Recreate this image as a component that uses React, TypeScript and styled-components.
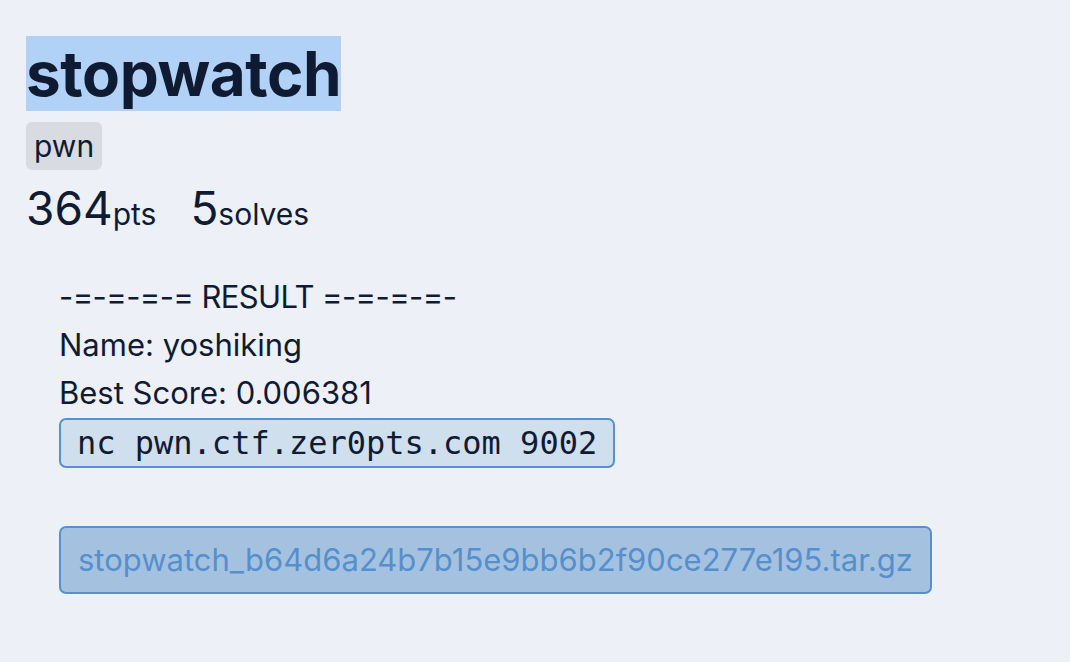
import styled, { createGlobalStyle } from "styled-components";

const GlobalStyle = createGlobalStyle`
  html, body {
    margin: 0;
    padding: 0;
    background: #edf1f7;
  }
  body {
    font-family: Inter, "Liberation Sans", Arial, sans-serif;
    color: #0f1a33;
  }
`;

const Page = styled.main`
  min-height: 662px;
  padding: 36px 26px;
  box-sizing: border-box;
  display: flex;
  flex-direction: column;
  align-items: flex-start;
`;

const Title = styled.h1`
  margin: 0;
  font-size: 62px;
  line-height: 75px;
  font-weight: 700;
  background: #b1d2f6;
  letter-spacing: -0.4px;
`;

const Tag = styled.span`
  margin-top: 11px;
  display: inline-block;
  padding: 0 8px;
  font-size: 30px;
  line-height: 48px;
  background: #d8dbe1;
  border-radius: 6px;
`;

const Stats = styled.div`
  margin-top: 10px;
  display: flex;
  align-items: baseline;
  gap: 34px;
`;

const Stat = styled.span`
  font-size: 46px;
  line-height: 56px;
`;

const Unit = styled.span`
  font-size: 30px;
`;

const Description = styled.div`
  margin-top: 31px;
  padding-left: 33px;
  display: flex;
  flex-direction: column;
  align-items: flex-start;
  font-size: 31px;
  line-height: 48px;
`;

const Banner = styled.span`
  letter-spacing: -0.6px;
`;

const Code = styled.code`
  display: inline-block;
  margin-top: 1px;
  font-family: "DejaVu Sans Mono", "Liberation Mono", monospace;
  font-size: 32px;
  line-height: 46px;
  padding: 0 16px;
  background: #cfdfee;
  border: 2px solid #5790cc;
  border-radius: 7px;
`;

const Download = styled.a`
  margin-top: 58px;
  margin-left: 33px;
  display: inline-block;
  padding: 0 17px;
  font-size: 31px;
  line-height: 64px;
  color: #5590cc;
  text-decoration: none;
  background: #a4c2e0;
  border: 2px solid #5790cc;
  border-radius: 7px;
`;

export default function App() {
  return (
    <>
      <GlobalStyle />
      <Page>
        <Title>stopwatch</Title>
        <Tag>pwn</Tag>
        <Stats>
          <Stat>
            364<Unit>pts</Unit>
          </Stat>
          <Stat>
            5<Unit>solves</Unit>
          </Stat>
        </Stats>
        <Description>
          <Banner>-=-=-=-= RESULT =-=-=-=-</Banner>
          <span>Name: yoshiking</span>
          <span>Best Score: 0.006381</span>
          <Code>nc pwn.ctf.zer0pts.com 9002</Code>
        </Description>
        <Download href="#">stopwatch_b64d6a24b7b15e9bb6b2f90ce277e195.tar.gz</Download>
      </Page>
    </>
  );
}
